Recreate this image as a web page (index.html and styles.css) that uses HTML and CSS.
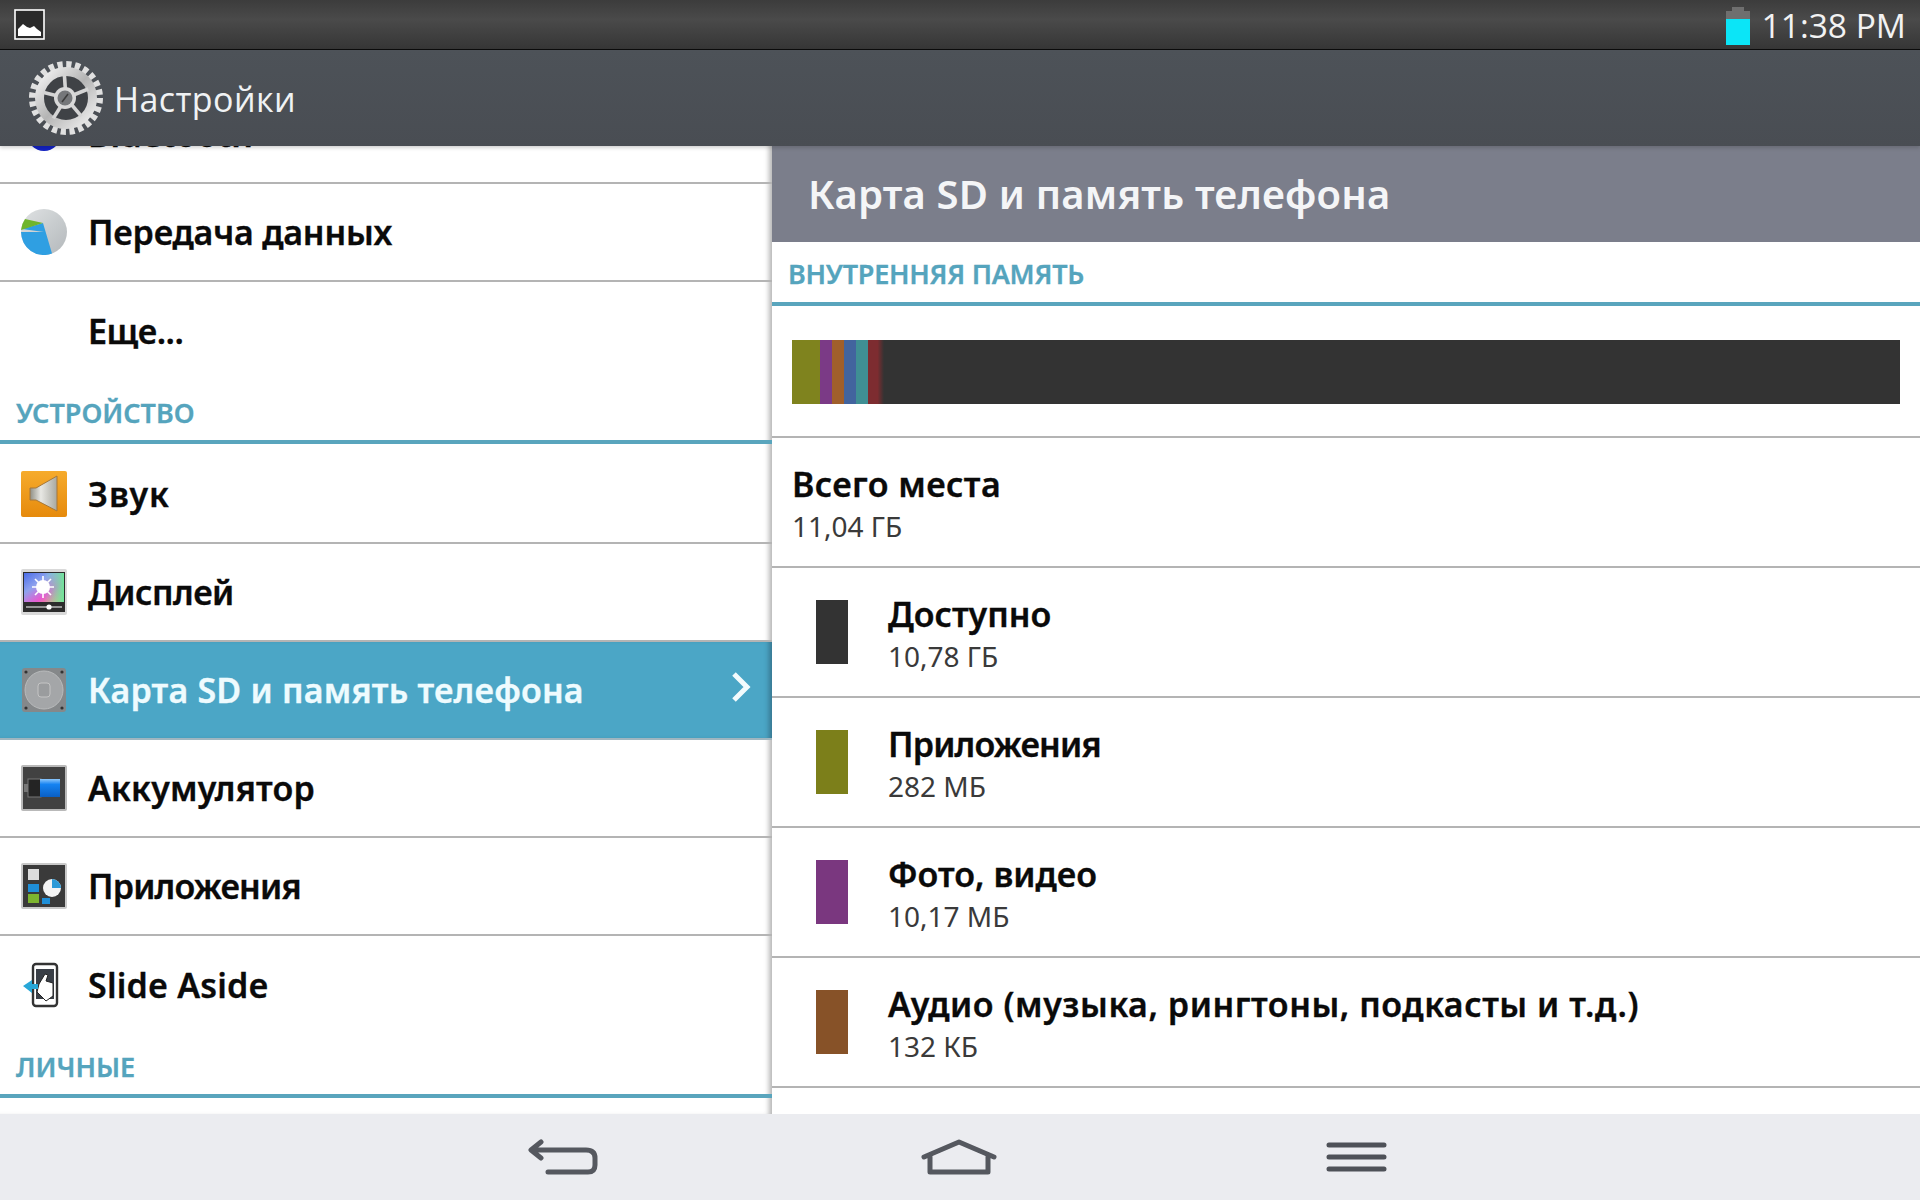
FILE: index.html
```html
<!DOCTYPE html>
<html lang="ru">
<head>
<meta charset="utf-8">
<title>Настройки</title>
<link rel="stylesheet" href="styles.css">
</head>
<body>
<div class="screen">
  <div class="status">
    <svg class="pic" viewBox="0 0 31 31"><rect x="1" y="1" width="29" height="29" fill="#2a2a2a" stroke="#fff" stroke-width="1.6"/><path d="M4 27V20l5-5 4 3 3 1 4-2 3 3 4 3v4z" fill="#fff"/></svg>
    <div class="clock">
      <svg class="batt" viewBox="0 0 24 38"><path d="M6 0h12v4h6v34H0V4h6z" fill="#6f6f6f"/><rect y="12" width="24" height="26" fill="#0be5f7"/></svg>
      <span>11:38 PM</span>
    </div>
  </div>
  <div class="header">
    <svg class="gear" viewBox="0 0 76 76">
      <defs><linearGradient id="metal" x1="0" y1="0" x2="1" y2="1"><stop offset="0" stop-color="#f6f6f6"/><stop offset=".5" stop-color="#b4b4b4"/><stop offset="1" stop-color="#f0f0f0"/></linearGradient></defs>
      <circle cx="38" cy="38" r="33.5" fill="none" stroke="#e0e0e0" stroke-width="7" stroke-dasharray="5.2 3.57"/>
      <circle cx="38" cy="38" r="26.5" fill="#3f4246" stroke="url(#metal)" stroke-width="9"/>
      <g stroke="#d4d4d4" stroke-width="3.6" transform="rotate(-4 38 38)">
        <path d="M38 38V14"/>
        <path d="M38 38V14" transform="rotate(72 38 38)"/>
        <path d="M38 38V14" transform="rotate(144 38 38)"/>
        <path d="M38 38V14" transform="rotate(216 38 38)"/>
        <path d="M38 38V14" transform="rotate(288 38 38)"/>
      </g>
      <circle cx="37" cy="38" r="11" fill="#d8d8d8"/>
      <circle cx="37" cy="38" r="7.5" fill="#75777a"/>
      <path d="M34 42l6-8" stroke="#3d3d3d" stroke-width="1.6"/>
    </svg>
    <span class="title">Настройки</span>
  </div>
  <div class="panes">
    <div class="left">
      <div class="list">
        <div class="row row-clip">
          <svg class="icon" viewBox="0 0 46 46"><circle cx="23" cy="23" r="17" fill="#1423c4"/></svg>
          <span class="label">Bluetooth</span>
        </div>
        <div class="row">
          <svg class="icon" viewBox="0 0 46 46"><defs><linearGradient id="pie" x1="0" y1="0" x2="1" y2="1"><stop offset="0" stop-color="#dfe2e3"/><stop offset="1" stop-color="#b3b8bb"/></linearGradient></defs><circle cx="23" cy="23" r="23" fill="url(#pie)"/><path d="M23 23L0 23A23 23 0 0 0 31 44.6L22 14 1 20z" fill="#2f9fe2"/><path d="M22 14L4 10A23 23 0 0 0 0 21z" fill="#6fb52c"/></svg>
          <span class="label label-data">Передача данных</span>
        </div>
        <div class="row row-last">
          <span class="icon"></span>
          <span class="label label-more">Еще...</span>
        </div>
        <div class="section section-dev">УСТРОЙСТВО</div>
        <div class="row">
          <svg class="icon" viewBox="0 0 46 46"><defs><linearGradient id="org" x1="0" y1="0" x2="0" y2="1"><stop offset="0" stop-color="#f6ab2c"/><stop offset="1" stop-color="#e68a0c"/></linearGradient><linearGradient id="spk" x1="0" y1="0" x2="1" y2="0"><stop offset="0" stop-color="#8f8f85"/><stop offset=".4" stop-color="#e8e8e4"/><stop offset="1" stop-color="#a8a8a0"/></linearGradient></defs><rect width="46" height="46" rx="2" fill="url(#org)"/><path d="M9 17h6L36 5v35L15 29H9z" fill="url(#spk)" stroke="#a5773a"/></svg>
          <span class="label label-sound">Звук</span>
        </div>
        <div class="row">
          <svg class="icon" viewBox="0 0 46 46"><defs><linearGradient id="spec" x1="0" y1="0" x2="1" y2="1"><stop offset="0" stop-color="#4a6ce8"/><stop offset=".35" stop-color="#8fa3ee"/><stop offset=".65" stop-color="#e85ad0"/><stop offset="1" stop-color="#f2c05c"/></linearGradient><linearGradient id="spec2" x1="0" y1="0" x2="1" y2="0"><stop offset=".5" stop-color="#6fe6c0" stop-opacity="0"/><stop offset="1" stop-color="#6fe69a"/></linearGradient></defs><rect width="46" height="46" rx="2" fill="#d9d9d9"/><rect x="2" y="3" width="42" height="40" fill="#2c2c2c"/><rect x="3" y="4" width="40" height="29" fill="url(#spec)"/><rect x="3" y="4" width="40" height="29" fill="url(#spec2)"/><path d="M22 7v22M11 18h22M14 10l16 16M30 10L14 26" stroke="#fff" stroke-width="1.6"/><circle cx="22" cy="18" r="7" fill="#fff"/><path d="M5 38h36" stroke="#bbb" stroke-width="1.5"/><circle cx="28" cy="38" r="2.6" fill="#fff"/></svg>
          <span class="label label-disp">Дисплей</span>
        </div>
        <div class="row row-sel">
          <svg class="icon" viewBox="0 0 46 46"><rect x="1" y="1" width="44" height="44" rx="3" fill="#85888a"/><circle cx="23" cy="23" r="19" fill="#a4a6a8" stroke="#b9bbbc"/><rect x="17" y="16" width="12" height="14" rx="3" fill="#9a9c9e" stroke="#c4c4c4"/><circle cx="5" cy="5" r="1.6" fill="#333"/><circle cx="41" cy="5" r="1.6" fill="#333"/><circle cx="5" cy="41" r="1.6" fill="#333"/><circle cx="41" cy="41" r="1.6" fill="#333"/></svg>
          <span class="label label-wide">Карта SD и память телефона</span>
          <svg class="chev" viewBox="0 0 20 32"><path d="M3 3l13 13L3 29" fill="none" stroke="#f2fbfd" stroke-width="5"/></svg>
        </div>
        <div class="row">
          <svg class="icon" viewBox="0 0 46 46"><defs><linearGradient id="cell" x1="0" y1="0" x2="0" y2="1"><stop offset="0" stop-color="#8cc6fb"/><stop offset=".3" stop-color="#1583f2"/><stop offset="1" stop-color="#0a5fc4"/></linearGradient></defs><rect width="46" height="46" rx="2" fill="#b9b9b9"/><rect x="2" y="2" width="42" height="42" fill="#414141"/><rect x="7" y="14" width="13" height="18" fill="#242424" stroke="#777"/><rect x="3" y="19" width="4" height="8" fill="#777"/><rect x="19" y="14" width="20" height="18" fill="url(#cell)"/></svg>
          <span class="label label-wide">Аккумулятор</span>
        </div>
        <div class="row">
          <svg class="icon" viewBox="0 0 46 46"><rect width="46" height="46" rx="2" fill="#c9c9c9"/><rect x="2" y="2" width="42" height="42" fill="#3a3a3a"/><rect x="7" y="6" width="11" height="11" fill="#ddd"/><circle cx="31" cy="25" r="9" fill="#f4f4f4"/><path d="M31 25v-9a9 9 0 0 1 9 9z" fill="#2c9ad8"/><rect x="7" y="21" width="11" height="8" fill="#1f8fd8"/><rect x="7" y="31" width="11" height="9" fill="#7db52f"/><rect x="21" y="35" width="8" height="6" fill="#1f8fd8"/></svg>
          <span class="label label-apps">Приложения</span>
        </div>
        <div class="row row-last">
          <svg class="icon" viewBox="0 0 46 46"><rect x="12" y="2" width="24" height="42" rx="3" fill="#fff" stroke="#333" stroke-width="2.4"/><rect x="15" y="7" width="18" height="30" fill="#3a3f47"/><path d="M18 22l6-10 3 1-2 6 7 2v13l-7 5-9-9z" fill="#fff" stroke="#222"/><path d="M2 24l9-6v4h6v5h-6v4z" fill="#28a7d8"/></svg>
          <span class="label label-wide">Slide Aside</span>
        </div>
        <div class="section section-personal">ЛИЧНЫЕ</div>
      </div>
    </div>
    <div class="right">
      <div class="crumb">Карта SD и память телефона</div>
      <div class="section section-mem">ВНУТРЕННЯЯ ПАМЯТЬ</div>
      <div class="usage">
        <div class="bar">
          <i class="seg seg-olive"></i><i class="seg seg-purple"></i><i class="seg seg-brown"></i><i class="seg seg-blue"></i><i class="seg seg-teal"></i><i class="seg seg-red"></i>
        </div>
      </div>
      <div class="item item-total">
        <div class="name name-wide">Всего места</div>
        <div class="value">11,04 ГБ</div>
      </div>
      <div class="item">
        <i class="swatch swatch-dark"></i>
        <div class="item-text"><div class="name">Доступно</div><div class="value">10,78 ГБ</div></div>
      </div>
      <div class="item">
        <i class="swatch swatch-olive"></i>
        <div class="item-text"><div class="name label-apps">Приложения</div><div class="value">282 МБ</div></div>
      </div>
      <div class="item">
        <i class="swatch swatch-purple"></i>
        <div class="item-text"><div class="name">Фото, видео</div><div class="value">10,17 МБ</div></div>
      </div>
      <div class="item">
        <i class="swatch swatch-brown"></i>
        <div class="item-text"><div class="name name-audio">Аудио (музыка, рингтоны, подкасты и т.д.)</div><div class="value">132 КБ</div></div>
      </div>
    </div>
  </div>
  <div class="nav">
    <svg class="nav-back" viewBox="0 0 70 36"><path d="M13 3L3 11l10 8M4 11h54q9 0 9 8v7q0 7-7 7H20" fill="none" stroke="#55585f" stroke-width="5" stroke-linecap="round" stroke-linejoin="round"/></svg>
    <svg class="nav-home" viewBox="0 0 76 36"><path d="M3 18L38 3l35 15M9 16v17h58V16" fill="none" stroke="#55585f" stroke-width="5" stroke-linecap="round" stroke-linejoin="round"/></svg>
    <svg class="nav-menu" viewBox="0 0 61 30"><path d="M3 3h55M3 15h55M3 27h55" fill="none" stroke="#4e5158" stroke-width="5" stroke-linecap="round"/></svg>
  </div>
</div>
</body>
</html>
```
FILE: styles.css
```css
* { box-sizing: border-box; }
html, body { margin: 0; padding: 0; }
body { width: 1920px; height: 1200px; overflow: hidden; background: #fff; font-family: "Noto Sans", "Open Sans", sans-serif; }
.screen { width: 1920px; height: 1200px; display: flex; flex-direction: column; }

.status { height: 50px; flex: none; display: flex; align-items: center; justify-content: space-between; padding: 0 14px 0 14px; background: linear-gradient(#3c3c3c, #4a4a4a 40%, #363636); border-bottom: 1px solid #0c0c0c; }
.pic { width: 31px; height: 31px; display: block; }
.clock { display: flex; align-items: center; gap: 12px; color: #f2f2f2; font-size: 33.5px; line-height: 40px; font-family: "Open Sans", sans-serif; }
.batt { width: 24px; height: 38px; display: block; margin-top: 2px; }

.header { height: 96px; flex: none; display: flex; align-items: center; padding: 0 0 0 28px; gap: 10px; background: linear-gradient(#4d5258, #494d53); position: relative; box-shadow: 0 2px 4px rgba(0,0,0,.16); }
.gear { width: 76px; height: 76px; display: block; }
.title { color: #f0f2f4; font-size: 34px; font-family: "Open Sans", sans-serif; letter-spacing: .4px; padding-top: 2px; }

.panes { flex: 1; min-height: 0; display: flex; }
.left { width: 772px; flex: none; overflow: hidden; background: #fff; box-shadow: inset -6px 0 5px -3px rgba(120,120,120,.55); }
.list { margin-top: -60px; }
.row { height: 98px; display: flex; align-items: center; padding: 0 0 0 21px; border-bottom: 2px solid #b4b4b4; gap: 21px; }
.row-last { border-bottom: 0; }
.row-sel { background: #4ba6c6; border-bottom: 2px solid #9fb6c0; box-shadow: inset -6px 0 5px -3px rgba(40,80,100,.55); }
.row-sel .label { color: #eefbfe; }
.icon { width: 46px; height: 46px; flex: none; display: block; }
.label { font-size: 34px; line-height: 40px; font-weight: 600; color: #0a0a0a; white-space: nowrap; -webkit-text-stroke: .35px currentColor; }
.label-data { letter-spacing: -.2px; }
.label-more { letter-spacing: -.5px; }
.label-sound { letter-spacing: 1px; }
.label-disp { letter-spacing: -.5px; }
.label-apps { letter-spacing: -.8px; }
.label-wide { letter-spacing: .2px; }
.chev { width: 20px; height: 32px; margin-left: auto; margin-right: 21px; margin-top: -6px; display: block; }

.section { color: #55a4bd; font-size: 27px; font-weight: 600; line-height: 32px; border-bottom: 4px solid #59a5bd; white-space: nowrap; -webkit-text-stroke: .3px currentColor; }
.section-dev { height: 64px; padding: 17px 0 0 16px; margin-bottom: 2px; }
.section-personal { height: 64px; padding: 17px 0 0 16px; }
.section-mem { height: 64px; padding: 16px 0 0 16px; letter-spacing: -.25px; }

.right { flex: 1; min-width: 0; overflow: hidden; }
.crumb { height: 96px; background: #7b7e8b; color: #f4f5f7; font-size: 40px; font-weight: 600; line-height: 96px; padding-left: 36px; white-space: nowrap; letter-spacing: .2px; }
.usage { height: 132px; padding: 34px 20px 0; border-bottom: 2px solid #b4b4b4; }
.bar { height: 64px; background: #333; display: flex; }
.seg { display: block; height: 100%; }
.seg-olive { width: 28px; background: #7f831e; }
.seg-purple { width: 12px; background: #7b3a86; }
.seg-brown { width: 12px; background: #a05f2b; }
.seg-blue { width: 12px; background: #42649e; }
.seg-teal { width: 12px; background: #3f8f94; }
.seg-red { width: 16px; background: linear-gradient(90deg, #7d2c30 60%, #333); }

.item { height: 130px; padding-left: 44px; display: flex; align-items: center; gap: 40px; border-bottom: 2px solid #b4b4b4; }
.item-total { padding-left: 20px; display: block; padding-top: 23px; }
.item-text { padding-top: 2px; }
.name { font-size: 34px; line-height: 46px; font-weight: 600; color: #0a0a0a; white-space: nowrap; -webkit-text-stroke: .35px currentColor; }
.name-wide { letter-spacing: .4px; }
.name-audio { letter-spacing: .55px; }
.value { font-size: 28px; line-height: 38px; color: #3a3a3a; white-space: nowrap; }
.swatch { width: 32px; height: 64px; display: block; flex: none; }
.swatch-dark { background: #333; }
.swatch-olive { background: #7c7f1a; }
.swatch-purple { background: #7a377f; }
.swatch-brown { background: #875228; }

.nav { height: 86px; flex: none; background: #ebecf0; display: flex; align-items: center; padding: 0 0 0 528px; }
.nav-back { width: 70px; height: 36px; display: block; }
.nav-home { width: 76px; height: 36px; display: block; margin-left: 323px; }
.nav-menu { width: 61px; height: 30px; display: block; margin-left: 329px; }
```
